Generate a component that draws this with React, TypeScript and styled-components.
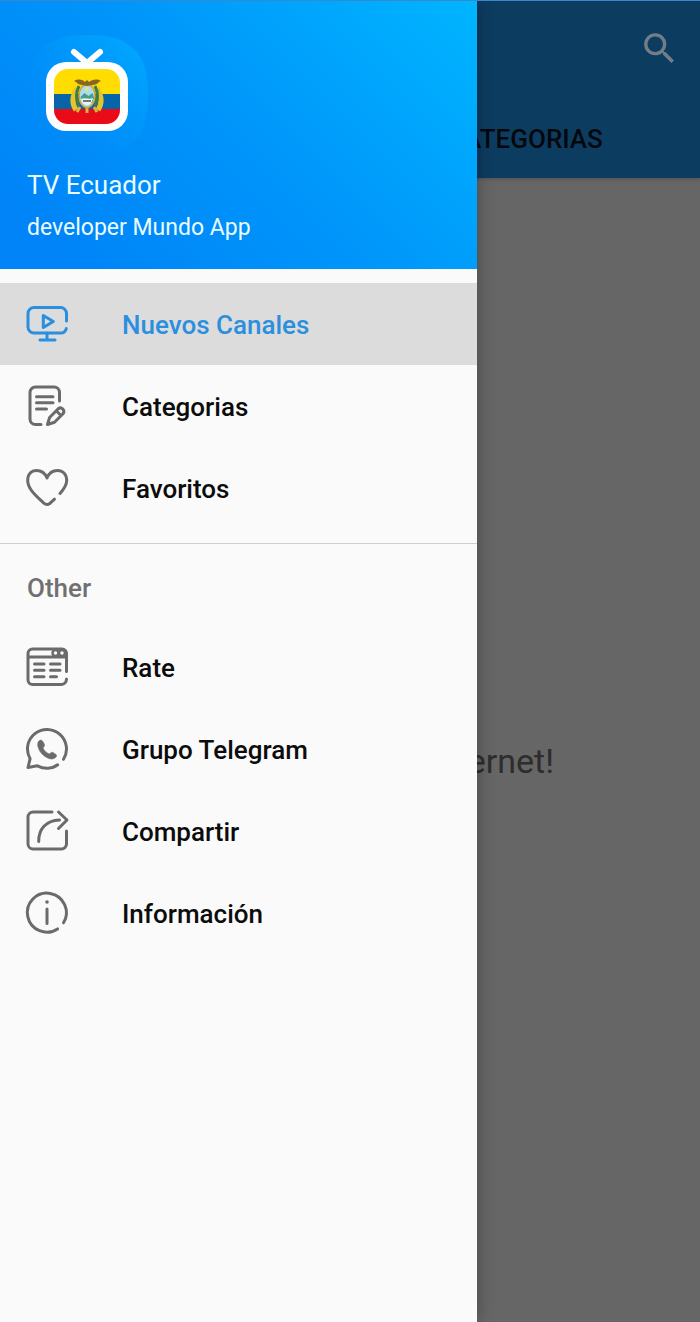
import React from 'react';
import styled, { createGlobalStyle } from 'styled-components';

const GlobalStyle = createGlobalStyle`
  *, *::before, *::after { box-sizing: border-box; }
  body { margin: 0; background: #666666; font-family: Roboto, "Liberation Sans", sans-serif; }
  button { font-family: inherit; border: 0; padding: 0; background: none; cursor: pointer; }
`;

const Screen = styled.div`
  display: grid;
  grid-template-columns: minmax(0, 1fr);
  min-height: 100vh;
  border-top: 1px solid #3987cd;
  overflow: hidden;
`;

const Page = styled.main`
  grid-area: 1 / 1;
  display: flex;
  flex-direction: column;
  background: #666666;
`;

const AppBar = styled.header`
  display: flex;
  flex-direction: column;
  background: #0d3c61;
  box-shadow: 0 1px 4px rgba(0, 0, 0, 0.2);
`;

const Toolbar = styled.div`
  display: flex;
  justify-content: flex-end;
  align-items: center;
  height: 94px;
  padding: 0 20px;
`;

const SearchButton = styled.button`
  display: flex;
  color: #717e88;
`;

const Tabs = styled.nav`
  display: flex;
  height: 83px;
  padding-top: 5px;
  padding-left: 50%;
`;

const Tab = styled.button`
  flex: 1;
  color: #04080d;
  font-size: 26px;
  font-weight: 500;
`;

const Message = styled.p`
  margin: 560px 0 0;
  padding-right: 146px;
  text-align: right;
  color: #2d2d2d;
  font-size: 34px;
  line-height: 46px;
`;

const Drawer = styled.aside`
  grid-area: 1 / 1;
  z-index: 1;
  width: 477px;
  max-width: 86%;
  background: #fafafa;
  box-shadow: 0 0 16px rgba(0, 0, 0, 0.3);
`;

const Profile = styled.div`
  height: 268px;
  padding: 34px 27px 0;
  color: #eafcff;
  background: linear-gradient(45deg, #0084f8 10%, #0095fa 50%, #00b5ff 100%);
`;

const Logo = styled.svg`
  display: block;
  width: 122px;
  height: 122px;
`;

const AppName = styled.div`
  margin-top: 11px;
  font-size: 26px;
  line-height: 34px;
`;

const Developer = styled.div`
  margin-top: 10px;
  font-size: 23px;
  line-height: 32px;
`;

const Menu = styled.nav<{ $divided?: boolean }>`
  padding: 14px 0;
  border-top: ${p => (p.$divided ? '1px solid #cfcfcf' : '0')};
`;

const MenuTitle = styled.h2`
  margin: 0 0 8px;
  padding: 0 27px;
  color: #707070;
  font-size: 26px;
  font-weight: 500;
  line-height: 60px;
`;

const MenuItem = styled.button<{ $active?: boolean }>`
  display: flex;
  align-items: center;
  gap: 54px;
  width: 100%;
  height: 82px;
  padding: 0 26px;
  text-align: left;
  font-size: 26px;
  font-weight: 500;
  color: ${p => (p.$active ? '#2b8fdf' : '#0c0c0c')};
  background: ${p => (p.$active ? '#dcdcdc' : 'transparent')};
`;

const Label = styled.span`
  padding-top: 2px;
`;

const Glyph = styled.svg<{ $active?: boolean }>`
  flex: none;
  width: 42px;
  height: 42px;
  overflow: visible;
  fill: none;
  stroke: ${p => (p.$active ? '#2b8fdf' : '#6b6b6b')};
  stroke-width: 3;
  stroke-linecap: round;
  stroke-linejoin: round;
`;

const icons: Record<string, React.ReactNode> = {
  tv: (
    <>
      <path d="M40.500 18V10.500a6 6 0 0 0-6-6H8a6 6 0 0 0-6 6V24a6 6 0 0 0 6 6h26.500a6 6 0 0 0 5.800-4.500" />
      <path d="M17.300 12.500v12l10-6zM21 30v7M14 37h15" />
    </>
  ),
  note: (
    <>
      <path d="M33.500 16V7.500a5.500 5.500 0 0 0-5.500-5.500H9.500A5.500 5.500 0 0 0 4 7.500V34a5.500 5.500 0 0 0 5.500 5.500H15" />
      <path d="M10.500 11.700h16.500M10.500 17.700h16.500M10.500 24h10" />
      <path d="M21.500 39.500l2.100-7 8.600-8.700c3.300-2.600 7.300 1.500 4.800 5L28.500 37.300zM30.500 26l4.500 4.500" />
    </>
  ),
  heart: (
    <path d="M34 26.500c4-4.500 6.700-8 6.700-13C40.700 7 36.500 3.500 31.500 3.500c-5 0-8.700 3-10.500 7.500C19.200 6.500 15.500 3.500 10.500 3.500 5.500 3.500 1.700 7 1.700 13.500c0 9 9.800 16.500 16.100 22.700 1.800 1.500 4.300 1.600 6 .300 1.400-1.200 3-2.700 4.700-4.300" />
  ),
  list: (
    <>
      <path d="M40.500 25.500V7.500A4.500 4.500 0 0 0 36 3H6.500A4.500 4.500 0 0 0 2 7.500V34a4.500 4.500 0 0 0 4.500 4.500H35a5.500 5.500 0 0 0 5.500-5.500M2 11H40.500" />
      <circle cx="29.500" cy="7" r="3" strokeWidth="2.500" />
      <circle cx="36" cy="7" r="3" strokeWidth="2.500" />
      <path d="M8.500 18h9.500M24.500 18h9.500M8.500 24.300h9.500M24.500 24.300h9.500M8.500 30.700h9.500M24.500 30.700h6" />
    </>
  ),
  chat: (
    <>
      <path d="M37.500 31.300A19.500 19.500 0 1 0 4.100 30.700L2 39.500l9.400-1.700c6.800 3.500 14.800 3.200 20.300-1" />
      <path
        d="M12.500 13.500c1.500-1.600 3-1.900 4-.500l1.800 3c.900 1.700-.400 2.800-1.300 3.900 1.500 3 3.500 5 6.500 6 1.200-1.200 2.500-2.300 4-1.200l2.500 1.700c1.200 1.100.4 2.500-.8 3.400-2.200 1.900-5 1.500-8.200-.100-4-2-7-5.200-8.500-9.200-1-2.700-1.400-5.200 0-7z"
        fill="#6b6b6b"
        strokeWidth="0.500"
      />
    </>
  ),
  share: (
    <>
      <path d="M26 2H7A5 5 0 0 0 2 7v27a5 5 0 0 0 5 5H35.500a5 5 0 0 0 5-5V21" />
      <path d="M32.500 2l8.500 8-8.500 8.500M12.700 31.500C12.500 19 20 10.500 33.500 10" />
    </>
  ),
  info: (
    <>
      <path d="M37.500 30.800A19.500 19.500 0 1 0 31.600 36.900M21 17v14.500" />
      <circle cx="21" cy="10" r="1.800" fill="#6b6b6b" stroke="none" />
    </>
  ),
};

const mainItems = [
  { icon: 'tv', label: 'Nuevos Canales', active: true },
  { icon: 'note', label: 'Categorias' },
  { icon: 'heart', label: 'Favoritos' },
];

const otherItems = [
  { icon: 'list', label: 'Rate' },
  { icon: 'chat', label: 'Grupo Telegram' },
  { icon: 'share', label: 'Compartir' },
  { icon: 'info', label: 'Información' },
];

function Item({ icon, label, active }: { icon: string; label: string; active?: boolean }) {
  return (
    <MenuItem $active={active} aria-current={active ? 'page' : undefined}>
      <Glyph $active={active} viewBox="0 0 42 42" aria-hidden="true">
        {icons[icon]}
      </Glyph>
      <Label>{label}</Label>
    </MenuItem>
  );
}

function AppLogo() {
  return (
    <Logo viewBox="0 0 122 122" aria-hidden="true">
      <defs>
        <linearGradient id="tile" x1="0" y1="1" x2="1" y2="0">
          <stop offset="0.250" stopColor="#0094fa" stopOpacity="0" />
          <stop offset="1" stopColor="#00abff" />
        </linearGradient>
        <clipPath id="display">
          <rect x="27" y="34" width="66" height="55" rx="14" />
        </clipPath>
      </defs>
      <path d="M61 0C104 0 121 17 121 60s-17 61-60 61S1 103 1 60 18 0 61 0z" fill="url(#tile)" />
      <path d="M47 17l13 11 13-11" fill="none" stroke="#fff" strokeWidth="6" strokeLinecap="round" strokeLinejoin="round" />
      <rect x="19" y="27" width="82" height="69" rx="20" fill="#fff" />
      <g clipPath="url(#display)">
        <rect x="27" y="34" width="66" height="26" fill="#ffdd00" />
        <rect x="27" y="59" width="66" height="16" fill="#0864a8" />
        <rect x="27" y="74" width="66" height="16" fill="#e90c18" />
      </g>
      <path d="M50 53c-5 8-5 16-1 22M70 53c5 8 5 16 1 22" fill="none" stroke="#e5c52b" strokeWidth="5" />
      <path d="M52 51c-4 8-3 14 0 20M68 51c4 8 3 14 0 20" fill="none" stroke="#3f7d46" strokeWidth="3" />
      <path d="M53 72l-3 5M67 72l3 5M60 73v5" fill="none" stroke="#d8b441" strokeWidth="3" />
      <ellipse cx="60" cy="61" rx="8" ry="11.500" fill="#a9dcec" stroke="#d0a43a" strokeWidth="1.500" />
      <path d="M53.500 62l4-4 4 3 4-3 1.500 5-2 5h-9z" fill="#4b9e83" />
      <path d="M54 64c4-2 8 1 12-1-1 5-3 7-6 7s-5-2-6-6z" fill="#e9f6f6" />
      <path d="M56 66h8" stroke="#554b48" strokeWidth="1.500" />
      <circle cx="60" cy="54" r="2" fill="#f2df7b" />
      <path d="M47 46c5-3 9-1 11 1l2-2 2 2c3-2 7-4 12-1-3 1-4 4-8 4l-6 1-5-1c-4 0-5-3-8-4z" fill="#8a6524" />
    </Logo>
  );
}

export default function App() {
  return (
    <>
      <GlobalStyle />
      <Screen>
        <Page>
          <AppBar>
            <Toolbar>
              <SearchButton aria-label="Search">
                <svg width="41" height="41" viewBox="0 0 24 24" fill="currentColor" aria-hidden="true">
                  <path d="M15.500 14h-.79l-.28-.27A6.470 6.470 0 0 0 16 9.500 6.500 6.500 0 1 0 9.500 16c1.610 0 3.090-.59 4.230-1.570l.27.28v.79l5 4.990L20.490 19l-4.990-5zm-6 0C7.010 14 5 11.990 5 9.500S7.010 5 9.500 5 14 7.010 14 9.500 11.990 14 9.500 14z" />
                </svg>
              </SearchButton>
            </Toolbar>
            <Tabs>
              <Tab>CATEGORIAS</Tab>
            </Tabs>
          </AppBar>
          <Message>internet!</Message>
        </Page>
        <Drawer>
          <Profile>
            <AppLogo />
            <AppName>TV Ecuador</AppName>
            <Developer>developer Mundo App</Developer>
          </Profile>
          <Menu>
            {mainItems.map(item => (
              <Item key={item.label} {...item} />
            ))}
          </Menu>
          <Menu $divided>
            <MenuTitle>Other</MenuTitle>
            {otherItems.map(item => (
              <Item key={item.label} {...item} />
            ))}
          </Menu>
        </Drawer>
      </Screen>
    </>
  );
}
